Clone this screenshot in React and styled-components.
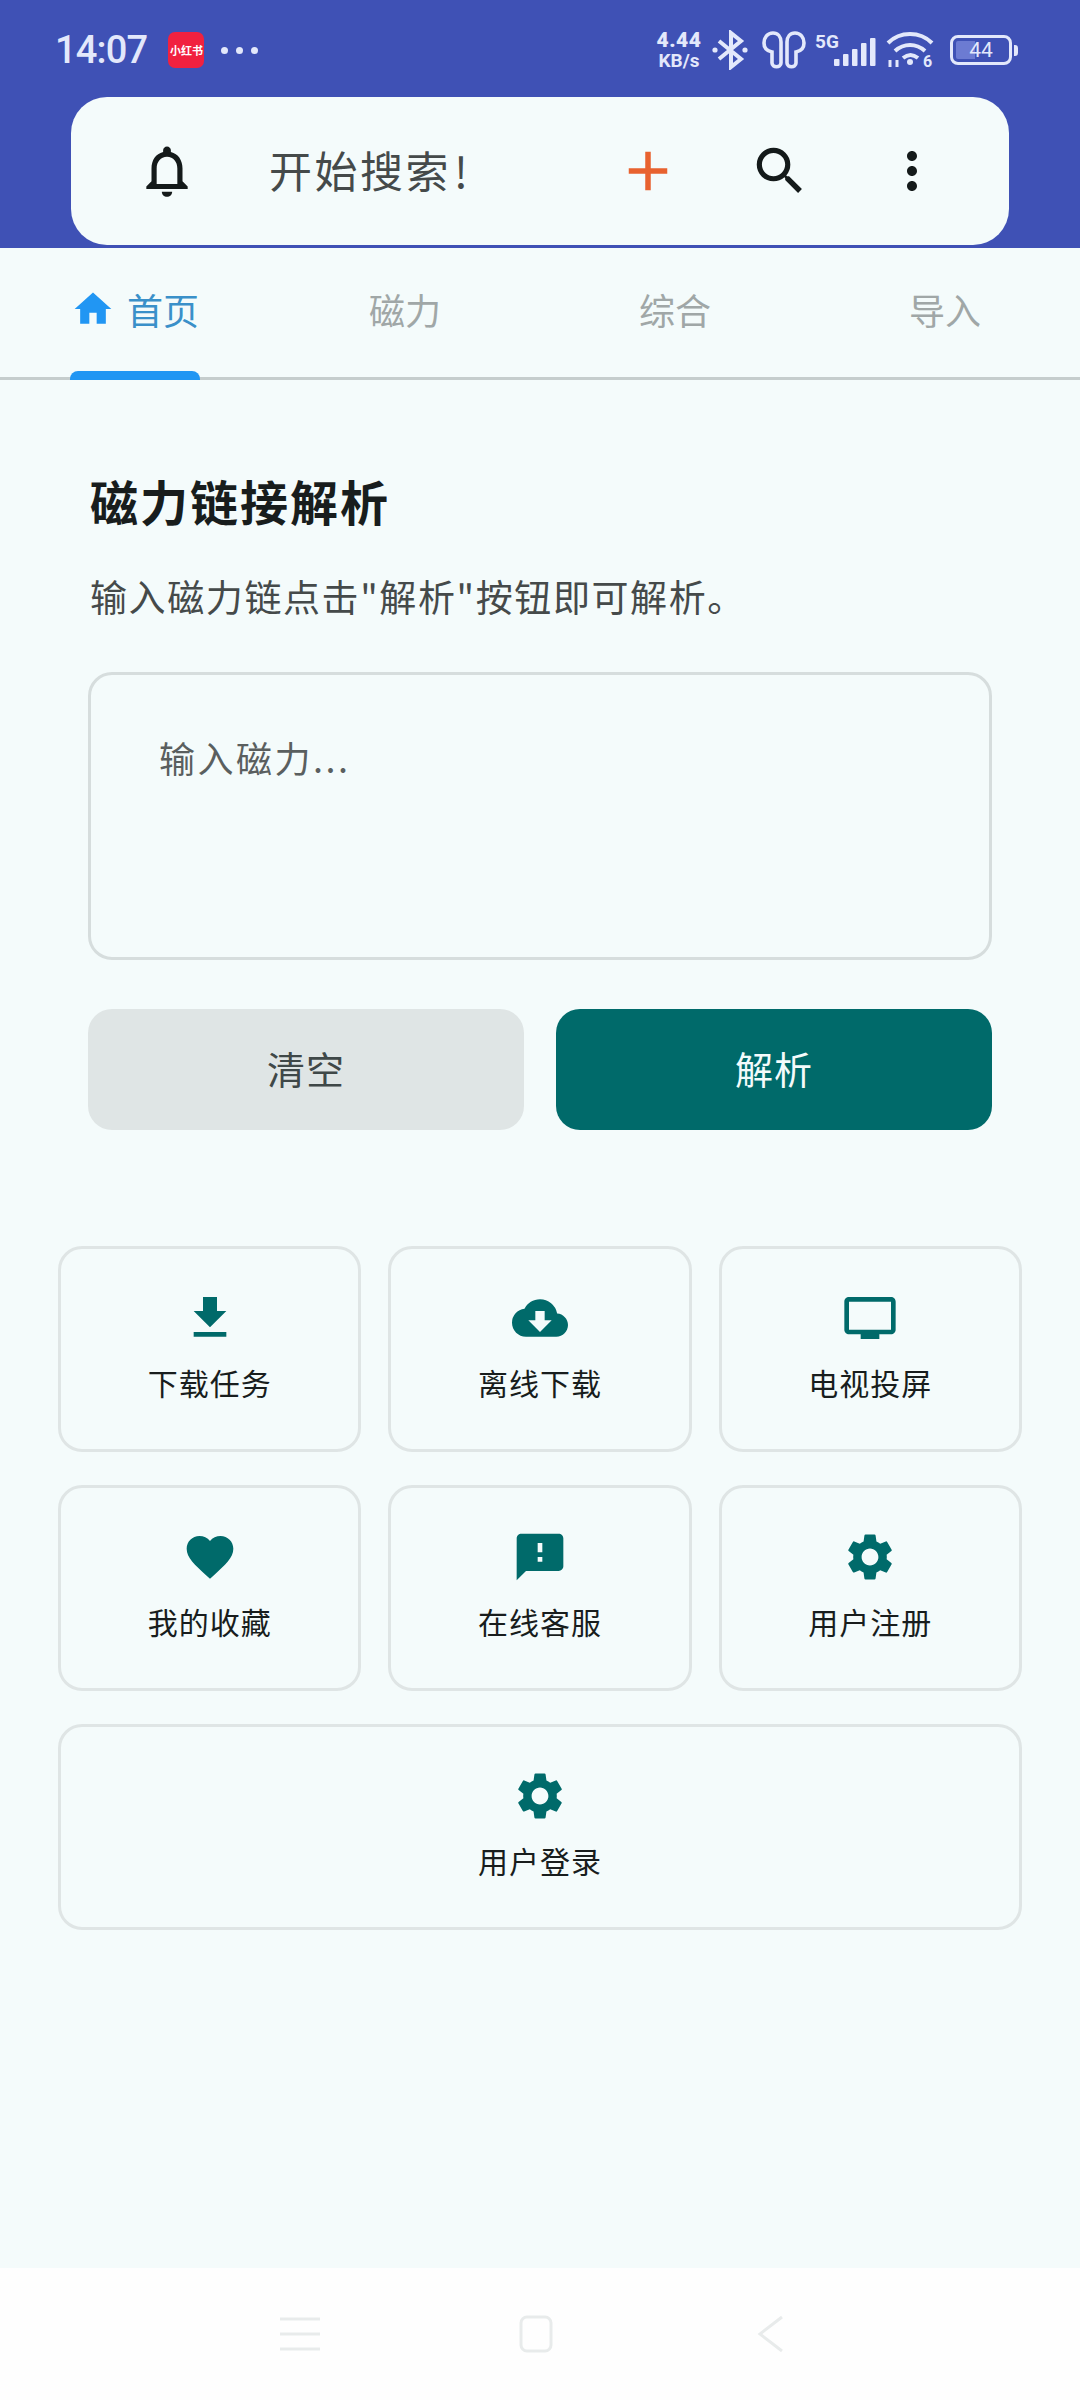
import React from "react";
import styled, { createGlobalStyle } from "styled-components";
import {
  MdAdd,
  MdCloudDownload,
  MdFavorite,
  MdFileDownload,
  MdHome,
  MdMoreVert,
  MdOutlineNotifications,
  MdOutlineTv,
  MdSearch,
  MdSettings,
  MdSmsFailed,
} from "react-icons/md";

const CJK = `"Noto Sans CJK SC", "Noto Sans", sans-serif`;

const GlobalStyle = createGlobalStyle`
  html, body {
    margin: 0;
    padding: 0;
    background: #f4fbfb;
  }
  * {
    box-sizing: border-box;
  }
`;

const Page = styled.div`
  width: 1080px;
  height: 2400px;
  display: flex;
  flex-direction: column;
  background: #f4fbfb;
  font-family: ${CJK};
  overflow: hidden;
`;

const Header = styled.header`
  height: 248px;
  background: #3f51b5;
  display: flex;
  flex-direction: column;
  align-items: center;
`;

const StatusBar = styled.div`
  width: 100%;
  height: 97px;
  padding: 3px 62px 0 55px;
  display: flex;
  align-items: center;
  justify-content: space-between;
  color: #e3e8fb;
`;

const StatusLeft = styled.div`
  display: flex;
  align-items: center;
`;

const Time = styled.span`
  font-family: Roboto, sans-serif;
  font-size: 38px;
  font-weight: 500;
  letter-spacing: -0.8px;
  line-height: 1;
`;

const AppBadge = styled.span`
  width: 36px;
  height: 36px;
  margin-left: 21px;
  border-radius: 7px;
  background: #f1213f;
  color: #fff;
  font-size: 11px;
  font-weight: 700;
  line-height: 36px;
  text-align: center;
  white-space: nowrap;
`;

const MoreDots = styled.span`
  display: flex;
  gap: 8px;
  margin-left: 17px;
  & > i {
    width: 7px;
    height: 7px;
    border-radius: 50%;
    background: #e3e8fb;
  }
`;

const StatusRight = styled.div`
  display: flex;
  align-items: center;
`;

const NetSpeed = styled.span`
  width: 52px;
  display: flex;
  flex-direction: column;
  align-items: center;
  font-family: Roboto, sans-serif;
  font-weight: 700;
  line-height: 1;
  margin-right: 6px;
  & > b {
    font-size: 21px;
    letter-spacing: 0.5px;
  }
  & > span {
    font-size: 19px;
  }
`;

const Glyph = styled.svg`
  display: block;
  flex: none;
  margin-left: ${(p) => p.$left || 0}px;
`;

const Battery = styled.span`
  width: 62px;
  height: 30px;
  margin-left: 14px;
  border: 3px solid #e3e8fb;
  border-radius: 8px;
  background: linear-gradient(90deg, #6c7bd2 40%, transparent 40%);
  background-clip: content-box;
  padding: 3px;
  display: flex;
  align-items: center;
  justify-content: center;
  font-family: Roboto, sans-serif;
  font-size: 21px;
  line-height: 1;
`;

const BatteryNub = styled.span`
  width: 4px;
  height: 11px;
  margin-left: 2px;
  border-radius: 0 3px 3px 0;
  background: #e3e8fb;
`;

const SearchCard = styled.div`
  width: 938px;
  height: 148px;
  padding: 0 31px 0 30px;
  background: #f4fbfb;
  border-radius: 36px;
  display: flex;
  align-items: center;
`;

const IconButton = styled.span`
  width: 132px;
  display: flex;
  justify-content: center;
  color: ${(p) => p.$color || "#141a1a"};
`;

const SearchHint = styled.span`
  flex: 1;
  margin: 0 0 4px 36px;
  font-size: 43px;
  letter-spacing: 2.5px;
  color: #454a4a;
  & > i {
    font-style: normal;
    margin-left: 3px;
  }
`;

const Tabs = styled.nav`
  height: 132px;
  display: grid;
  grid-template-columns: repeat(4, 270px);
  border-bottom: 3px solid #c5cdcd;
`;

const Tab = styled.div`
  display: flex;
  justify-content: center;
  align-items: stretch;
`;

const TabLabel = styled.span`
  position: relative;
  display: flex;
  align-items: center;
  gap: 12px;
  padding: 0 1px 7px;
  font-size: 36px;
  color: ${(p) => (p.$active ? "#3a90c9" : "#a0a7a7")};
  & > svg {
    color: #2196f3;
  }
  ${(p) =>
    p.$active &&
    `
    &::after {
      content: "";
      position: absolute;
      left: 0;
      right: 0;
      bottom: -3px;
      height: 9px;
      background: #2196f3;
      border-radius: 8px 8px 0 0;
    }
  `}
`;

const Parser = styled.section`
  padding: 88px 88px 0;
  display: flex;
  flex-direction: column;
`;

const Title = styled.h1`
  margin: 0 0 0 2px;
  font-size: 48px;
  line-height: 64px;
  font-weight: 700;
  letter-spacing: 2px;
  color: #181d1d;
`;

const Hint = styled.p`
  margin: 37px 0 0 2px;
  font-size: 37px;
  line-height: 54px;
  letter-spacing: 1.6px;
  color: #454a4a;
  white-space: nowrap;
`;

const Input = styled.div`
  height: 288px;
  margin-top: 49px;
  padding: 55px 68px;
  border: 3px solid #d6dddd;
  border-radius: 24px;
  font-size: 36px;
  line-height: 54px;
  letter-spacing: 2.5px;
  color: #5a5f5f;
`;

const Actions = styled.div`
  margin-top: 49px;
  display: grid;
  grid-template-columns: 1fr 1fr;
  gap: 32px;
`;

const ActionButton = styled.button`
  height: 121px;
  padding: 0 0 4px;
  border: 0;
  border-radius: 24px;
  font-family: ${CJK};
  font-size: 38px;
  letter-spacing: 1px;
  background: ${(p) => (p.$primary ? "#006a6a" : "#dfe5e5")};
  color: ${(p) => (p.$primary ? "#f4fbfb" : "#3f4848")};
`;

const Shortcuts = styled.section`
  margin: 116px 58px 0;
  display: grid;
  grid-template-columns: repeat(3, 1fr);
  column-gap: 27px;
  row-gap: 33px;
`;

const Shortcut = styled.div`
  grid-column: ${(p) => (p.$wide ? "1 / -1" : "auto")};
  height: 206px;
  border: 3px solid #dfe5e5;
  border-radius: 24px;
  display: flex;
  flex-direction: column;
  align-items: center;
  padding-top: 41px;
  color: #006a6a;
`;

const ShortcutLabel = styled.span`
  margin-top: 14px;
  font-size: 30px;
  line-height: 44px;
  letter-spacing: 1px;
  color: #181d1d;
`;

const SystemNav = styled.footer`
  margin-top: auto;
  height: 132px;
  padding-left: 280px;
  background: #fefefe;
  display: flex;
  align-items: center;
  color: #e8ebeb;
`;

const HomeKey = styled.svg`
  margin: 0 204px 0 199px;
`;

const tiles = [
  { label: "下载任务", Icon: MdFileDownload },
  { label: "离线下载", Icon: MdCloudDownload },
  { label: "电视投屏", Icon: MdOutlineTv },
  { label: "我的收藏", Icon: MdFavorite },
  { label: "在线客服", Icon: MdSmsFailed },
  { label: "用户注册", Icon: MdSettings },
  { label: "用户登录", Icon: MdSettings, wide: true },
];

const tabs = ["首页", "磁力", "综合", "导入"];

const StatusIcons = () => (
  <>
    {/* bluetooth */}
    <Glyph width="38" height="40" viewBox="0 0 38 40" fill="none" stroke="#e3e8fb" strokeWidth="4">
      <path d="M8 11l22 18-10 8V3l10 8L8 29" />
      <circle cx="4" cy="20" r="2.6" fill="#e3e8fb" stroke="none" />
      <circle cx="34" cy="20" r="2.6" fill="#e3e8fb" stroke="none" />
    </Glyph>
    {/* earbuds */}
    <Glyph $left={13} width="44" height="38" viewBox="0 0 44 38" fill="none" stroke="#e3e8fb" strokeWidth="3.6">
      <path d="M11 2C5.5 2 2 6.5 2 12c0 5 3 8 8 9v11c0 5 9 5 9 0V11C19 6 16 2 11 2z" />
      <path d="M33 2c5.5 0 9 4.5 9 10 0 5-3 8-8 9v11c0 5-9 5-9 0V11C25 6 28 2 33 2z" />
    </Glyph>
    {/* 5G + signal */}
    <Glyph $left={9} width="62" height="38" viewBox="0 0 62 38" fill="#e3e8fb">
      <text x="0" y="17" fontFamily="Roboto, sans-serif" fontSize="19" fontWeight="700">5G</text>
      <rect x="19" y="28" width="5.5" height="7" rx="1" />
      <rect x="28" y="23" width="5.5" height="12" rx="1" />
      <rect x="37" y="18" width="5.5" height="17" rx="1" />
      <rect x="46" y="12" width="5.5" height="23" rx="1" />
      <rect x="55" y="7" width="5.5" height="28" rx="1" />
    </Glyph>
    {/* wifi 6 */}
    <Glyph $left={9} width="50" height="42" viewBox="0 -2 50 42" fill="none" stroke="#e3e8fb" strokeWidth="4">
      <path d="M2 12C14 0 34 0 46 12" />
      <path d="M9 20c9-8 21-8 30 0" />
      <path d="M17 27c5-4 10-4 15 0" />
      <circle cx="24" cy="31" r="3" fill="#e3e8fb" stroke="none" />
      <path d="M4 36v-7M11 36v-7" strokeWidth="3" />
      <text x="37" y="36" fill="#e3e8fb" stroke="none" fontFamily="Roboto, sans-serif" fontSize="16" fontWeight="700">6</text>
    </Glyph>
  </>
);

const App = () => {
  return (
    <Page>
      <GlobalStyle />
      <Header>
        <StatusBar>
          <StatusLeft>
            <Time>14:07</Time>
            <AppBadge>小红书</AppBadge>
            <MoreDots>
              <i />
              <i />
              <i />
            </MoreDots>
          </StatusLeft>
          <StatusRight>
            <NetSpeed>
              <b>4.44</b>
              <span>KB/s</span>
            </NetSpeed>
            <StatusIcons />
            <Battery>44</Battery>
            <BatteryNub />
          </StatusRight>
        </StatusBar>
        <SearchCard>
          <IconButton>
            <MdOutlineNotifications size={62} />
          </IconButton>
          <SearchHint>
            开始搜索<i>!</i>
          </SearchHint>
          <IconButton $color="#e8622f">
            <MdAdd size={66} />
          </IconButton>
          <IconButton>
            <MdSearch size={62} />
          </IconButton>
          <IconButton>
            <MdMoreVert size={60} />
          </IconButton>
        </SearchCard>
      </Header>

      <Tabs>
        {tabs.map((tab, i) => (
          <Tab key={tab}>
            <TabLabel $active={i === 0}>
              {i === 0 && <MdHome size={44} />}
              {tab}
            </TabLabel>
          </Tab>
        ))}
      </Tabs>

      <Parser>
        <Title>磁力链接解析</Title>
        <Hint>输入磁力链点击"解析"按钮即可解析。</Hint>
        <Input>输入磁力...</Input>
        <Actions>
          <ActionButton>清空</ActionButton>
          <ActionButton $primary>解析</ActionButton>
        </Actions>
      </Parser>

      <Shortcuts>
        {tiles.map(({ label, Icon, wide }) => (
          <Shortcut key={label} $wide={wide}>
            <Icon size={56} />
            <ShortcutLabel>{label}</ShortcutLabel>
          </Shortcut>
        ))}
      </Shortcuts>

      <SystemNav>
        <svg width="40" height="36" viewBox="0 0 40 36" stroke="currentColor" strokeWidth="3">
          <path d="M0 3h40M0 18h40M0 33h40" />
        </svg>
        <HomeKey width="34" height="38" viewBox="0 0 34 38" fill="none" stroke="currentColor" strokeWidth="3">
          <rect x="2" y="2" width="30" height="34" rx="6" />
        </HomeKey>
        <svg width="27" height="38" viewBox="0 0 27 38" fill="none" stroke="currentColor" strokeWidth="3">
          <path d="M25 2L3 19l22 17" />
        </svg>
      </SystemNav>
    </Page>
  );
};

export default App;
